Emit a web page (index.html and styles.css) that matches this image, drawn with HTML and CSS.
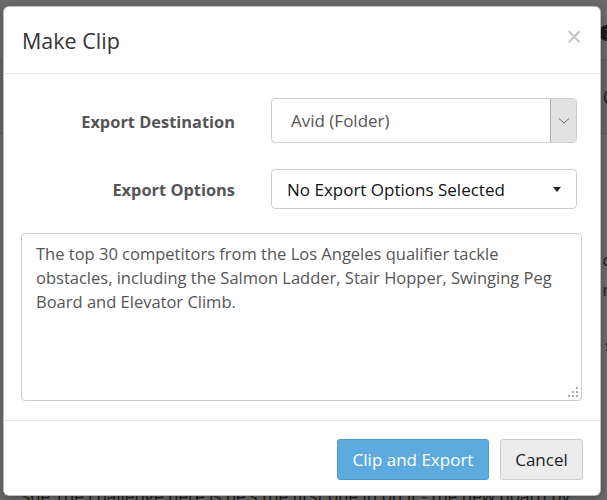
FILE: index.html
```html
<!DOCTYPE html>
<html>
<head>
<meta charset="utf-8">
<link rel="stylesheet" href="styles.css">
</head>
<body>
<div class="page">
  <div class="page-top"><span class="avatar">?</span></div>
  <div class="page-bar"><span class="bar-glyph">C</span></div>
  <div class="page-lines">
    <div class="pl">d</div>
    <div class="pl">n</div>
    <div class="pl pl-gap">s</div>
  </div>
  <p class="page-text">sne The challenge here is he's the first one in on it - the new board by</p>
</div>

<div class="modal">
  <div class="modal-header">
    <h4 class="modal-title">Make Clip</h4>
    <span class="close">×</span>
  </div>
  <div class="modal-body">
    <div class="form-grid">
      <label class="form-label">Export Destination</label>
      <div class="native-select">
        <span class="ns-value">Avid (Folder)</span>
        <span class="ns-arrow">
          <svg width="12" height="8" viewBox="0 0 12 8"><path d="M1 1.5 L6 6 L11 1.5" fill="none" stroke="#6a6a6a" stroke-width="1"/></svg>
        </span>
      </div>
      <label class="form-label">Export Options</label>
      <div class="dropdown-btn">
        <span>No Export Options Selected</span>
        <span class="caret"></span>
      </div>
    </div>
    <div class="textarea">The top 30 competitors from the Los Angeles qualifier tackle obstacles, including the Salmon Ladder, Stair Hopper, Swinging Peg Board and Elevator Climb.<svg class="grip" width="10" height="10" viewBox="0 0 10 10"><g fill="#a9a9a9"><rect x="8" y="0" width="2" height="2"/><rect x="4" y="4" width="2" height="2"/><rect x="8" y="4" width="2" height="2"/><rect x="0" y="8" width="2" height="2"/><rect x="4" y="8" width="2" height="2"/><rect x="8" y="8" width="2" height="2"/></g></svg></div>
  </div>
  <div class="modal-footer">
    <button class="btn btn-primary">Clip and Export</button>
    <button class="btn btn-default">Cancel</button>
  </div>
</div>
</body>
</html>
```

FILE: styles.css
```css
* { box-sizing: border-box; }
html, body { margin: 0; padding: 0; }
body {
  width: 607px;
  height: 500px;
  overflow: hidden;
  background: #6b6b6b;
  font-family: "Open Sans", "Liberation Sans", sans-serif;
  position: relative;
}
.page {
  height: 500px;
  position: relative;
  color: #1e1e1e;
}
.page-top {
  height: 60px;
  border-bottom: 1px solid #5e5e5e;
  display: flex;
  justify-content: flex-end;
  padding-top: 25px;
}
.avatar {
  display: inline-block;
  width: 16px;
  height: 16px;
  border-radius: 8px;
  background: #1a1a1a;
  color: #6b6b6b;
  font-size: 11px;
  text-align: center;
  line-height: 16px;
  margin-right: -8px;
}
.page-bar {
  height: 74px;
  background: #666;
  border-bottom: 1px solid #5a5a5a;
  display: flex;
  justify-content: flex-end;
  align-items: center;
}
.bar-glyph { font-size: 20px; margin-right: -8px; color: #222; }
.page-lines {
  padding-top: 114px;
  display: flex;
  flex-direction: column;
  align-items: flex-end;
  font-size: 17px;
}
.pl { height: 30px; margin-right: -6px; color: #1a1a1a; }
.pl-gap { margin-top: 25px; }
.page-text {
  position: absolute;
  left: 22px;
  top: 484px;
  margin: 0;
  font-size: 17px;
  color: #1a1a1a;
  white-space: nowrap;
}

.modal {
  position: absolute;
  left: 3px;
  top: 6px;
  width: 598px;
  height: 490px;
  background: #fff;
  border: 1px solid rgba(0,0,0,0.25);
  border-radius: 6px;
  display: flex;
  flex-direction: column;
  box-shadow: 0 3px 9px rgba(0,0,0,0.3);
}
.modal-header {
  height: 67px;
  border-bottom: 1px solid #e5e5e5;
  display: flex;
  align-items: center;
  justify-content: space-between;
  padding: 0 18px 0 18px;
}
.modal-title {
  margin: 0;
  font-size: 21.5px;
  font-weight: 400;
  color: #333;
  padding-top: 1px;
}
.close {
  font-size: 27px;
  color: #c4c4c4;
  font-family: "Liberation Sans", sans-serif;
  line-height: 1;
  margin-top: -6px;
}
.modal-body {
  height: 346px;
  padding: 24px 17px 0 17px;
}
.form-grid {
  display: grid;
  grid-template-columns: 214px 306px;
  grid-template-rows: 45px 40px;
  column-gap: 36px;
  row-gap: 26px;
  align-items: center;
}
.form-label {
  text-align: right;
  font-weight: 700;
  font-size: 16.4px;
  color: #555;
  padding-top: 1px;
}
.native-select {
  height: 45px;
  border: 1px solid #cfcfcf;
  border-radius: 4px;
  display: flex;
  align-items: stretch;
  overflow: hidden;
}
.ns-value {
  flex: 1;
  display: flex;
  align-items: center;
  padding-left: 19px;
  font-size: 17px;
  color: #555;
}
.ns-arrow {
  width: 26px;
  background: #e2e2e2;
  border-left: 1px solid #adadad;
  display: flex;
  align-items: center;
  justify-content: center;
}
.dropdown-btn {
  height: 40px;
  border: 1px solid #ccc;
  border-radius: 4px;
  display: flex;
  align-items: center;
  justify-content: space-between;
  padding: 0 15px 0 15px;
  font-size: 17px;
  color: #111;
}
.caret {
  width: 0;
  height: 0;
  border-left: 4px solid transparent;
  border-right: 4px solid transparent;
  border-top: 5px solid #222;
}
.textarea {
  position: relative;
  margin-top: 24px;
  width: 561px;
  height: 168px;
  border: 1px solid #ccc;
  border-radius: 4px;
  padding: 8px 20px 8px 14px;
  font-size: 16.5px;
  line-height: 24px;
  color: #555;
}
.grip {
  position: absolute;
  right: 3px;
  bottom: 3px;
}
.modal-footer {
  flex: 1;
  border-top: 1px solid #e5e5e5;
  display: flex;
  justify-content: flex-end;
  align-items: flex-start;
  padding: 18px 17px 0 0;
  gap: 11px;
}
.btn {
  height: 41px;
  border-radius: 3px;
  font-family: "Open Sans", "Liberation Sans", sans-serif;
  font-size: 17px;
  padding: 0;
  border: 1px solid;
  white-space: nowrap;
}
.btn-primary {
  width: 152px;
  background: #5dabde;
  border-color: #4c9ad0;
  color: #fff;
}
.btn-default {
  width: 83px;
  background: #ececec;
  border-color: #ccc;
  color: #222;
}
```
